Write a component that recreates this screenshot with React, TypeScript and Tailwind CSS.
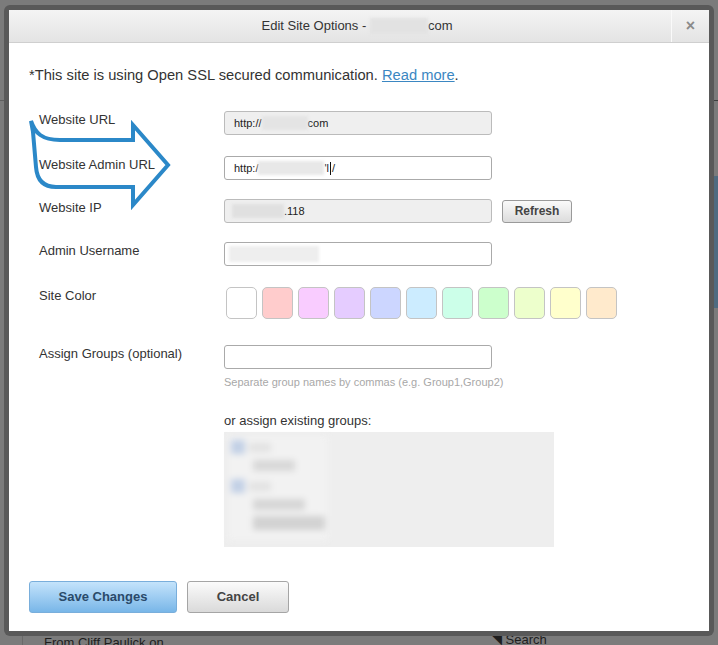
import React from "react";

const swatches = [
  "bg-white",
  "bg-[#ffcccc]",
  "bg-[#f9ccff]",
  "bg-[#e5ccff]",
  "bg-[#ccd6ff]",
  "bg-[#ccecff]",
  "bg-[#ccffe9]",
  "bg-[#ccffcc]",
  "bg-[#edffcc]",
  "bg-[#ffffcc]",
  "bg-[#ffeacc]",
];

function Blur({ className }: { className: string }) {
  return <span className={`inline-block blur-[1.5px] ${className}`} />;
}

function Row({ label, top, children }: { label: string; top: string; children: React.ReactNode }) {
  return (
    <div className={`flex items-start ${top}`}>
      <div className="w-[195px] pl-[10px] text-[13px] leading-[15px] pt-[1px] text-[#333]">{label}</div>
      <div className="flex items-center gap-[10px]">{children}</div>
    </div>
  );
}

export default function App() {
  return (
    <div
      className="relative w-[718px] h-[645px] overflow-hidden bg-[#7b7b7b]"
      style={{ fontFamily: '"Liberation Sans", Arial, sans-serif' }}
    >
      {/* page behind the overlay */}
      <div className="absolute left-0 top-[100px] w-[4px] h-px bg-[#5f5f5f]" />
      <div className="absolute right-0 top-[100px] w-[5px] h-px bg-[#3f3f3f]" />
      <div className="absolute right-0 top-[176px] w-[5px] h-[132px] bg-[#4f6b80]" />
      <div className="absolute left-[22px] top-[636px] w-px h-[9px] bg-[#6a6a6a]" />
      <div className="absolute left-[44px] top-[633px] text-[13px] text-[#1e1e1e]">From Cliff Paulick on</div>
      <div className="absolute left-[492px] top-[630px] text-[13px] text-[#1e1e1e]">◥ Search</div>

      {/* dialog */}
      <div className="absolute left-[4px] top-[5px] w-[710px] h-[631px] rounded-[6px] bg-[#595959] p-[5px]">
        <div className="relative h-full flex flex-col bg-white">
          {/* header */}
          <div className="flex h-[33px] border-b border-[#cfcfcf] bg-gradient-to-b from-[#f4f4f4] to-[#e4e4e4]">
            <div className="flex-1 flex items-center justify-center pl-[34px] text-[13px] text-[#333]">
              Edit Site Options -&nbsp;
              <Blur className="w-[58px] h-[16px] bg-[#e2e2e2]" />
              com
            </div>
            <div className="w-[38px] border-l border-[#fafafa] flex items-center justify-center text-[16px] font-bold text-[#8a8a8a]">
              ×
            </div>
          </div>

          {/* body */}
          <div className="flex flex-col pl-[20px] pt-[23px]">
            <p className="text-[14.7px] leading-[18px] text-[#333]">
              *This site is using Open SSL secured communication.{" "}
              <span className="text-[#3b87c2] underline">Read more</span>.
            </p>

            <Row label="Website URL" top="mt-[27px]">
              <div className="w-[268px] h-[24px] rounded-[3px] border border-[#bbb] bg-[#efefef] flex items-center pl-[9px] text-[11px] text-[#222]">
                http://
                <Blur className="w-[46px] h-[14px] bg-[#e4e4e4]" />
                com
              </div>
            </Row>

            <Row label="Website Admin URL" top="mt-[21px]">
              <div className="w-[268px] h-[24px] rounded-[3px] border border-[#aaa] bg-white flex items-center pl-[9px] text-[11px] text-[#222]">
                http:/
                <Blur className="w-[66px] h-[14px] bg-[#e8e8e8]" />
                'l<span className="inline-block w-px h-[13px] bg-[#111] mx-[1px]" />/
              </div>
            </Row>

            <Row label="Website IP" top="mt-[19px]">
              <div className="w-[268px] h-[24px] rounded-[3px] border border-[#bbb] bg-[#efefef] flex items-center pl-[7px] text-[11px] text-[#222]">
                <Blur className="w-[52px] h-[14px] bg-[#e0e0e0]" />
                .118
              </div>
              <div className="w-[70px] h-[23px] rounded-[3px] border border-[#9a9a9a] bg-gradient-to-b from-[#fafafa] to-[#dcdcdc] flex items-center justify-center text-[12px] font-bold text-[#444]">
                Refresh
              </div>
            </Row>

            <Row label="Admin Username" top="mt-[19px]">
              <div className="w-[268px] h-[24px] rounded-[3px] border border-[#aaa] bg-white flex items-center pl-[4px]">
                <Blur className="w-[90px] h-[16px] bg-[#eeeeee]" />
              </div>
            </Row>

            <Row label="Site Color" top="mt-[21px]">
              <div className="flex gap-[5px] pl-[2px]">
                {swatches.map((c) => (
                  <div key={c} className={`w-[31px] h-[32px] rounded-[5px] border border-[#c4c4c4] ${c}`} />
                ))}
              </div>
            </Row>

            <Row label="Assign Groups (optional)" top="mt-[26px]">
              <div className="flex flex-col">
                <div className="w-[268px] h-[24px] rounded-[3px] border border-[#aaa] bg-white" />
                <div className="mt-[6px] text-[11px] leading-[14px] text-[#a8a8a8]">
                  Separate group names by commas (e.g. Group1,Group2)
                </div>
                <div className="mt-[24px] text-[13px] leading-[16px] text-[#333]">or assign existing groups:</div>
                <div className="mt-[3px] w-[330px] h-[115px] bg-[#eeeeee] p-[4px]">
                  <div className="w-[100px] h-[104px] bg-[#f2f2f2] flex flex-col gap-[6px] pt-[4px] pl-[3px] blur-[3px]">
                    <div className="flex items-center gap-[4px]">
                      <div className="w-[14px] h-[14px] bg-[#c2d0e6]" />
                      <div className="w-[22px] h-[9px] bg-[#e2e2e2]" />
                    </div>
                    <div className="ml-[22px] w-[42px] h-[11px] bg-[#d8d8d8]" />
                    <div className="flex items-center gap-[4px] mt-[2px]">
                      <div className="w-[14px] h-[14px] bg-[#c2d0e6]" />
                      <div className="w-[22px] h-[9px] bg-[#e2e2e2]" />
                    </div>
                    <div className="ml-[22px] w-[52px] h-[11px] bg-[#d6d6d6]" />
                    <div className="ml-[22px] w-[72px] h-[14px] bg-[#d2d2d2]" />
                  </div>
                </div>
              </div>
            </Row>

            {/* buttons */}
            <div className="flex gap-[10px] mt-[34px]">
              <div className="w-[148px] h-[32px] rounded-[3px] border border-[#79aedb] bg-gradient-to-b from-[#c4e3fb] to-[#78b6e8] flex items-center justify-center text-[13px] font-bold text-[#2a4a6a]">
                Save Changes
              </div>
              <div className="w-[102px] h-[32px] rounded-[3px] border border-[#a5a5a5] bg-gradient-to-b from-[#fbfbfb] to-[#dadada] flex items-center justify-center text-[13px] font-bold text-[#444]">
                Cancel
              </div>
            </div>
          </div>

          {/* annotation arrow drawn over the labels */}
          <svg
            className="absolute left-0 top-0 pointer-events-none"
            width="200"
            height="220"
            viewBox="9 10 200 220"
          >
            <path
              d="M31 121 C35 133 42 140 60 140 L133 140 L133 125 L168 165 L133 205 L133 187 L56 187 C43 187 37 180 36 167 L33 132 Z"
              fill="none"
              stroke="#2b88c8"
              strokeWidth="4"
              strokeLinejoin="miter"
            />
          </svg>
        </div>
      </div>
    </div>
  );
}
